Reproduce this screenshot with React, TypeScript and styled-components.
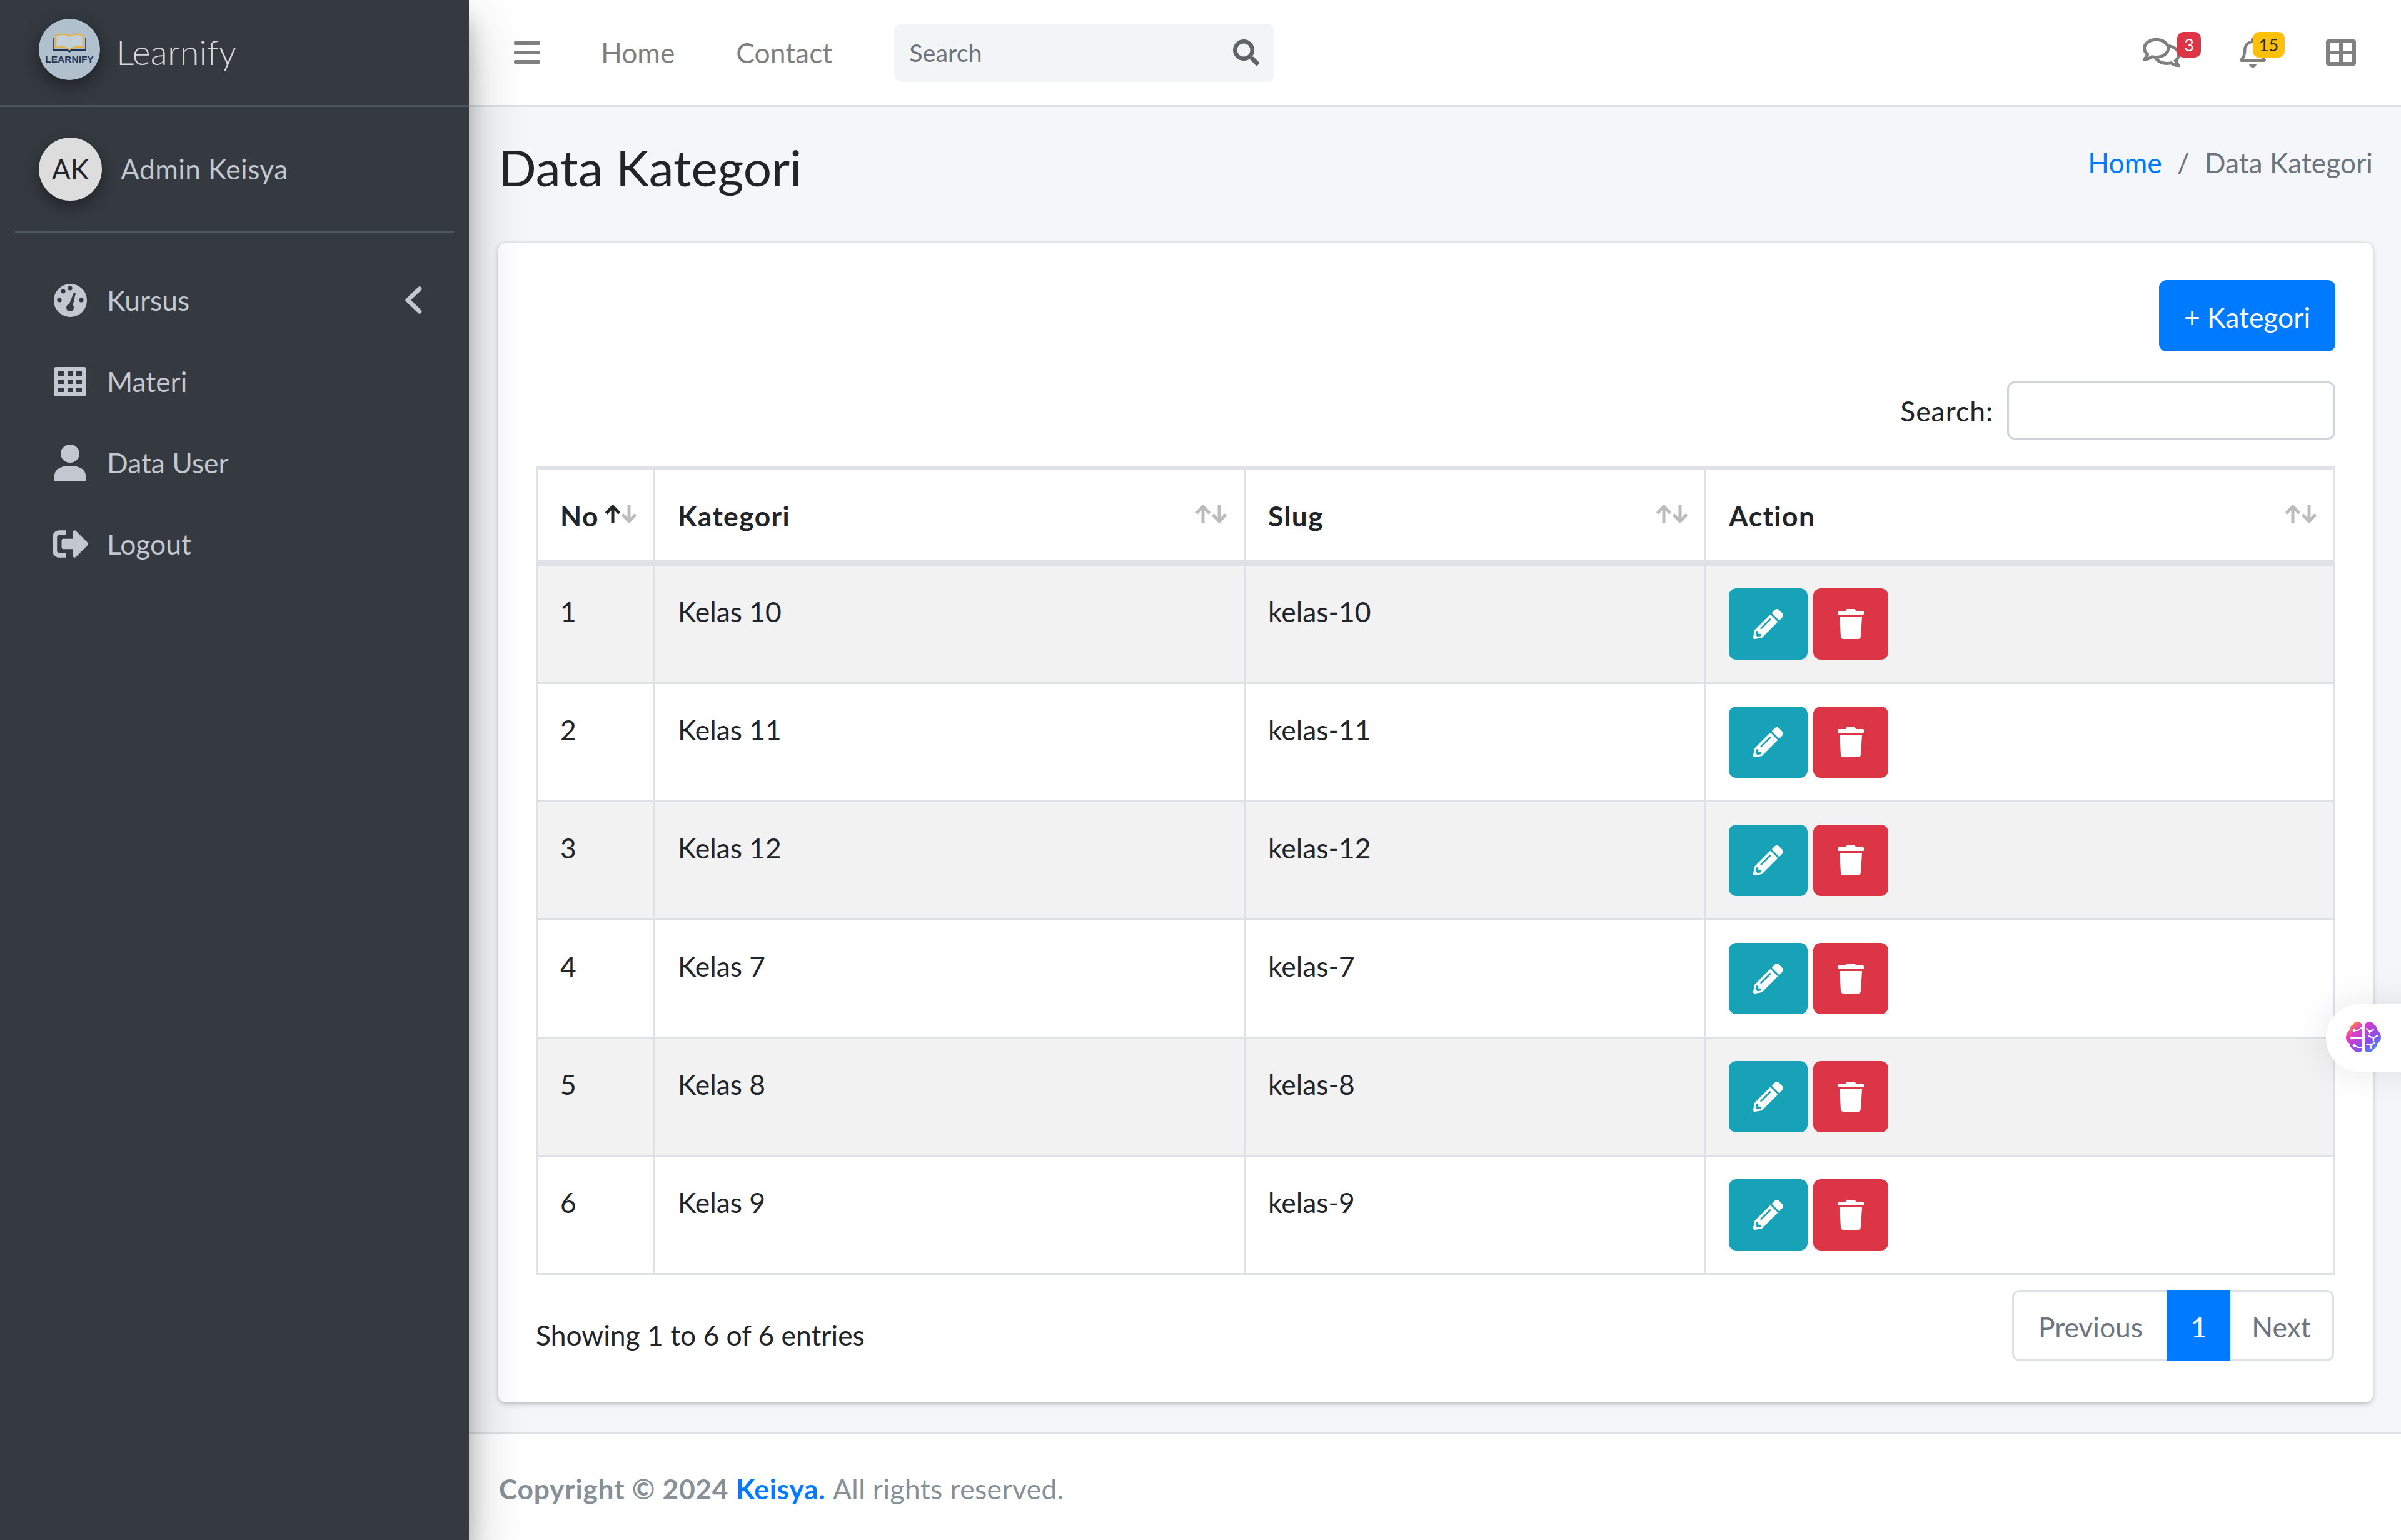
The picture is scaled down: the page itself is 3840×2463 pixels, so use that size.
import React from "react";
import styled, { createGlobalStyle } from "styled-components";
import { FaPencilAlt, FaRegBell, FaRegComments, FaSearch, FaSignOutAlt, FaTrash } from "react-icons/fa";

const GlobalStyle = createGlobalStyle`
  html, body {
    margin: 0;
    padding: 0;
    font-family: "Lato", "Noto Sans", sans-serif;
    font-size: 44.4px;
    line-height: 74px;
    color: #212529;
    background: #f4f6f9;
  }
  * { box-sizing: border-box; }
`;

const Page = styled.div`
  display: flex;
  width: 3840px;
  height: 2463px;
  overflow: hidden;
  position: relative;
`;

const Sidebar = styled.aside`
  width: 750px;
  flex-shrink: 0;
  background: #343a40;
  box-shadow: 0 42px 84px rgba(0, 0, 0, 0.25), 0 30px 30px rgba(0, 0, 0, 0.22);
  position: relative;
  z-index: 2;
`;

const Brand = styled.div`
  display: flex;
  align-items: center;
  height: 171px;
  padding: 0 0 10px 62px;
  gap: 26px;
  border-bottom: 3px solid #4b545c;
`;

const BrandLogo = styled.svg`
  width: 98px;
  height: 98px;
  border-radius: 50%;
  box-shadow: 0 9px 30px rgba(0, 0, 0, 0.45);
`;

const BrandName = styled.span`
  font-size: 56px;
  font-weight: 300;
  color: rgba(255, 255, 255, 0.8);
  padding-top: 8px;
`;

const UserPanel = styled.div`
  display: flex;
  align-items: center;
  gap: 30px;
  margin: 0 24px;
  padding: 48px 0 48px 38px;
  height: 201px;
  border-bottom: 3px solid #4f5962;
`;

const Avatar = styled.div`
  width: 101px;
  height: 101px;
  border-radius: 50%;
  background: #dddddd;
  color: #212529;
  display: flex;
  align-items: center;
  justify-content: center;
  box-shadow: 0 9px 24px rgba(0, 0, 0, 0.4);
`;

const UserName = styled.span`
  color: #c2c7d0;
  letter-spacing: 0.4px;
`;

const SideNav = styled.nav`
  display: flex;
  flex-direction: column;
  padding: 43px 24px 0 62px;
`;

const SideItem = styled.div`
  display: flex;
  align-items: center;
  height: 130px;
  color: #c2c7d0;
`;

const SideIcon = styled.span`
  width: 109px;
  padding-left: 24px;
  display: flex;
  align-items: center;
  svg { display: block; flex-shrink: 0; }
`;

const LogoutIcon = styled(FaSignOutAlt)`
  margin-left: -2px;
`;

const SideLabel = styled.span`
  flex: 1;
`;

const Chevron = styled.svg`
  width: 30px;
  height: 44px;
  margin-right: 50px;
  fill: none;
  stroke: #c2c7d0;
  stroke-width: 7;
  stroke-linecap: round;
  stroke-linejoin: round;
`;

const Main = styled.div`
  flex: 1;
  display: flex;
  flex-direction: column;
  min-width: 0;
`;

const Navbar = styled.header`
  display: flex;
  align-items: center;
  height: 171px;
  background: #ffffff;
  border-bottom: 3px solid #dee2e6;
  padding: 0 0 0 72px;
  color: rgba(0, 0, 0, 0.5);
`;

const Burger = styled.svg`
  width: 42px;
  height: 36px;
  margin-right: 97px;
`;

const NavLink = styled.span<{ $gap: number }>`
  margin-right: ${(p) => p.$gap}px;
`;

const SearchBox = styled.div`
  display: flex;
  align-items: center;
  justify-content: space-between;
  width: 608px;
  height: 93px;
  background: #f2f4f6;
  border-radius: 12px;
  padding: 0 24px;
  font-size: 39.5px;
  color: #6c757d;
`;

const NavRight = styled.div`
  margin-left: auto;
  display: flex;
  align-items: center;
  padding-right: 72px;
`;

const NavIcon = styled.span<{ $gap: number }>`
  position: relative;
  display: flex;
  margin-right: ${(p) => p.$gap}px;
`;

const Badge = styled.span<{ $warn?: boolean }>`
  position: absolute;
  top: ${(p) => (p.$warn ? "-9px" : "-3px")};
  left: ${(p) => (p.$warn ? "24px" : "55px")};
  height: 41px;
  min-width: ${(p) => (p.$warn ? "51px" : "38px")};
  border-radius: 10px;
  background: ${(p) => (p.$warn ? "#ffc107" : "#dc3545")};
  color: ${(p) => (p.$warn ? "#1f2d3d" : "#ffffff")};
  font-size: 27px;
  line-height: 41px;
  text-align: center;
`;

const GridIcon = styled.svg`
  width: 48px;
  height: 42px;
  fill: #808080;
`;

const Content = styled.main`
  flex: 1;
  padding: 0 45px 48px 47px;
  display: flex;
  flex-direction: column;
`;

const ContentHeader = styled.div`
  display: flex;
  align-items: center;
  justify-content: space-between;
  height: 196px;
  margin-bottom: 21px;
`;

const Title = styled.h1`
  margin: 0 0 4px;
  font-size: 80px;
  font-weight: 400;
  line-height: 104px;
`;

const Breadcrumb = styled.div`
  display: flex;
  gap: 24px;
  margin-bottom: 18px;
  color: #6c757d;
`;

const BreadLink = styled.span`
  color: #007bff;
`;

const Card = styled.section`
  flex: 1;
  background: #ffffff;
  border-radius: 12px;
  box-shadow: 0 0 3px rgba(0, 0, 0, 0.125), 0 3px 9px rgba(0, 0, 0, 0.2);
  padding: 60px;
  display: flex;
  flex-direction: column;
`;

const AddRow = styled.div`
  display: flex;
  justify-content: flex-end;
  margin-bottom: 48px;
`;

const AddButton = styled.div`
  height: 114px;
  width: 282px;
  padding-top: 3px;
  background: #007bff;
  color: #ffffff;
  border-radius: 12px;
  display: flex;
  align-items: center;
  justify-content: center;
`;

const FilterRow = styled.div`
  display: flex;
  justify-content: flex-end;
  align-items: center;
  gap: 22px;
  margin-bottom: 43px;
`;

const FilterLabel = styled.span`
  letter-spacing: 1px;
`;

const FilterInput = styled.div`
  width: 525px;
  height: 93px;
  background: #ffffff;
  border: 3px solid #ced4da;
  border-radius: 12px;
`;

const Table = styled.table`
  width: 2878px;
  table-layout: fixed;
  border-collapse: collapse;
  border: 3px solid #dee2e6;
`;

const HeadCell = styled.th`
  padding: 37px 27px 35px 36px;
  height: 151px;
  line-height: 72px;
  text-align: left;
  font-weight: 700;
  letter-spacing: 1.4px;
  vertical-align: top;
  border: 3px solid #dee2e6;
  border-top-width: 6px;
  border-bottom-width: 9px;
`;

const HeadInner = styled.div`
  display: flex;
  justify-content: space-between;
`;

const SortIcon = styled.svg`
  width: 50px;
  height: 28px;
  margin-top: 19px;
  fill: none;
  stroke-width: 5;
`;

const Row = styled.tr<{ $odd: boolean }>`
  background: ${(p) => (p.$odd ? "#f2f2f2" : "#ffffff")};
`;

const Cell = styled.td`
  padding: 36px;
  height: 189px;
  vertical-align: top;
  border: 3px solid #dee2e6;
`;

const Actions = styled.div`
  display: flex;
  gap: 9px;
`;

const ActionButton = styled.div<{ $danger?: boolean }>`
  width: ${(p) => (p.$danger ? "120px" : "126px")};
  height: 114px;
  border-radius: 12px;
  background: ${(p) => (p.$danger ? "#dc3545" : "#17a2b8")};
  color: #ffffff;
  display: flex;
  align-items: center;
  justify-content: center;
`;

const TableFooter = styled.div`
  display: flex;
  justify-content: space-between;
  align-items: flex-start;
`;

const Info = styled.div`
  margin-top: 59px;
`;

const Pagination = styled.div`
  display: flex;
  margin-top: 24px;
  height: 114px;
  margin-right: 2px;
`;

const PageItem = styled.div<{ $width: number; $active?: boolean; $pos?: "first" | "last" }>`
  width: ${(p) => p.$width}px;
  padding-top: 3px;
  display: flex;
  align-items: center;
  justify-content: center;
  background: ${(p) => (p.$active ? "#007bff" : "#ffffff")};
  color: ${(p) => (p.$active ? "#ffffff" : "#6c757d")};
  border: 3px solid ${(p) => (p.$active ? "#007bff" : "#dee2e6")};
  border-left-width: ${(p) => (p.$pos === "last" ? 0 : 3)}px;
  border-right-width: ${(p) => (p.$pos === "first" ? 0 : 3)}px;
  border-radius: ${(p) => (p.$pos === "first" ? "12px 0 0 12px" : p.$pos === "last" ? "0 12px 12px 0" : "0")};
`;

const Footer = styled.footer`
  height: 172px;
  background: #ffffff;
  border-top: 3px solid #dee2e6;
  padding: 4px 48px 0;
  display: flex;
  align-items: center;
  color: #869099;
  letter-spacing: 0.4px;
`;

const FooterStrong = styled.strong`
  white-space: pre;
  letter-spacing: 0.7px;
`;

const FooterLink = styled.span`
  color: #007bff;
`;

const AssistantTab = styled.div`
  position: absolute;
  left: 3720px;
  top: 1606px;
  width: 160px;
  height: 108px;
  border-radius: 54px 0 0 54px;
  background: #ffffff;
  box-shadow: 0 0 60px rgba(0, 0, 0, 0.1);
  display: flex;
  align-items: center;
  padding-left: 32px;
  z-index: 3;
`;

const BrainIcon = styled.svg`
  width: 56px;
  height: 52px;
`;

const rows = [
  { no: 1, kategori: "Kelas 10", slug: "kelas-10" },
  { no: 2, kategori: "Kelas 11", slug: "kelas-11" },
  { no: 3, kategori: "Kelas 12", slug: "kelas-12" },
  { no: 4, kategori: "Kelas 7", slug: "kelas-7" },
  { no: 5, kategori: "Kelas 8", slug: "kelas-8" },
  { no: 6, kategori: "Kelas 9", slug: "kelas-9" },
];

const Sort = ({ active }: { active?: boolean }) => (
  <SortIcon viewBox="0 0 50 28">
    <path d="M12 28V3M1.5 13 12 2l10.5 11" stroke={active ? "#212529" : "#bcbcbc"} />
    <path d="M38 0v25M27.5 15 38 26l10.5-11" stroke="#bcbcbc" />
  </SortIcon>
);

const GaugeIcon = () => (
  <svg width="53" height="53" viewBox="0 0 53 53">
    <circle cx="26.5" cy="26.5" r="26.5" fill="#c2c7d0" />
    <g fill="#343a40">
      <circle cx="9" cy="26" r="3.6" />
      <circle cx="15" cy="12" r="3.6" />
      <circle cx="26" cy="7" r="3.6" />
      <circle cx="44" cy="26" r="3.6" />
      <circle cx="26" cy="38" r="6" />
      <path d="M24 34l8-20 3 1-5 21z" />
    </g>
  </svg>
);

const TilesIcon = () => (
  <svg width="52" height="47" viewBox="0 0 52 47">
    <path
      fillRule="evenodd"
      fill="#c2c7d0"
      d="M4 0h44a4 4 0 0 1 4 4v39a4 4 0 0 1-4 4H4a4 4 0 0 1-4-4V4a4 4 0 0 1 4-4zM7 7v7h9V7zm15 0v7h9V7zm14 0v7h9V7zM7 20v7h9v-7zm15 0v7h9v-7zm14 0v7h9v-7zM7 33v7h9v-7zm15 0v7h9v-7zm14 0v7h9v-7z"
    />
  </svg>
);

const PersonIcon = () => (
  <svg width="52" height="58" viewBox="0 0 52 58">
    <ellipse cx="26" cy="14.5" rx="15" ry="14.5" fill="#c2c7d0" />
    <path d="M1 58V50C1 40 11 34 26 34s25 6 25 16v8z" fill="#c2c7d0" />
  </svg>
);

const App: React.FC = () => {
  return (
    <Page>
      <GlobalStyle />
      <Sidebar>
        <Brand>
          <BrandLogo viewBox="0 0 98 98">
            <circle cx="49" cy="49" r="49" fill="#b0c0cc" />
            <path
              d="M27 27c7-3 16-3 22 1 6-4 15-4 22-1v19c-7-2-16-1-22 3-6-4-15-5-22-3z"
              fill="#c4d0d8"
              stroke="#e2b34c"
              strokeWidth="2.5"
            />
            <path d="M23 30v19h19" fill="none" stroke="#1e3358" strokeWidth="1.6" />
            <path d="M75 30v19H56" fill="none" stroke="#1e3358" strokeWidth="1.6" />
            <path d="M23 48h19c3 0 5 1 7 3 2-2 4-3 7-3h19v3H57l-5 1-3 2-3-2-5-1H23z" fill="#1e3358" />
            <text x="49" y="70" textAnchor="middle" fontFamily="'Liberation Sans', sans-serif" fontWeight="700" fontSize="15.5" fill="#1e3358">
              LEARNIFY
            </text>
          </BrandLogo>
          <BrandName>Learnify</BrandName>
        </Brand>
        <UserPanel>
          <Avatar>AK</Avatar>
          <UserName>Admin Keisya</UserName>
        </UserPanel>
        <SideNav>
          <SideItem>
            <SideIcon>
              <GaugeIcon />
            </SideIcon>
            <SideLabel>Kursus</SideLabel>
            <Chevron viewBox="0 0 30 44">
              <path d="M25 4 6 22l19 18" />
            </Chevron>
          </SideItem>
          <SideItem>
            <SideIcon>
              <TilesIcon />
            </SideIcon>
            <SideLabel>Materi</SideLabel>
          </SideItem>
          <SideItem>
            <SideIcon>
              <PersonIcon />
            </SideIcon>
            <SideLabel>Data User</SideLabel>
          </SideItem>
          <SideItem>
            <SideIcon>
              <LogoutIcon size={58} />
            </SideIcon>
            <SideLabel>Logout</SideLabel>
          </SideItem>
        </SideNav>
      </Sidebar>
      <Main>
        <Navbar>
          <Burger viewBox="0 0 42 36">
            <rect width="42" height="6" y="0" rx="2" fill="#808080" />
            <rect width="42" height="6" y="15" rx="2" fill="#808080" />
            <rect width="42" height="6" y="30" rx="2" fill="#808080" />
          </Burger>
          <NavLink $gap={98}>Home</NavLink>
          <NavLink $gap={99}>Contact</NavLink>
          <SearchBox>
            Search
            <FaSearch size={42} color="#5f6468" />
          </SearchBox>
          <NavRight>
            <NavIcon $gap={92}>
              <FaRegComments size={60} color="#808080" />
              <Badge>3</Badge>
            </NavIcon>
            <NavIcon $gap={93}>
              <FaRegBell size={48} color="#808080" />
              <Badge $warn>15</Badge>
            </NavIcon>
            <GridIcon viewBox="0 0 48 42">
              <path
                fillRule="evenodd"
                d="M4 0h40a4 4 0 0 1 4 4v34a4 4 0 0 1-4 4H4a4 4 0 0 1-4-4V4a4 4 0 0 1 4-4zM6 6v12h15V6zm21 0v12h15V6zM6 24v12h15V24zm21 0v12h15V24z"
              />
            </GridIcon>
          </NavRight>
        </Navbar>
        <Content>
          <ContentHeader>
            <Title>Data Kategori</Title>
            <Breadcrumb>
              <BreadLink>Home</BreadLink>
              <span>/</span>
              <span>Data Kategori</span>
            </Breadcrumb>
          </ContentHeader>
          <Card>
            <AddRow>
              <AddButton>+ Kategori</AddButton>
            </AddRow>
            <FilterRow>
              <FilterLabel>Search:</FilterLabel>
              <FilterInput />
            </FilterRow>
            <Table>
              <colgroup>
                <col style={{ width: 188 }} />
                <col style={{ width: 944 }} />
                <col style={{ width: 737 }} />
                <col />
              </colgroup>
              <thead>
                <tr>
                  <HeadCell>
                    <HeadInner>
                      No <Sort active />
                    </HeadInner>
                  </HeadCell>
                  <HeadCell>
                    <HeadInner>
                      Kategori <Sort />
                    </HeadInner>
                  </HeadCell>
                  <HeadCell>
                    <HeadInner>
                      Slug <Sort />
                    </HeadInner>
                  </HeadCell>
                  <HeadCell>
                    <HeadInner>
                      Action <Sort />
                    </HeadInner>
                  </HeadCell>
                </tr>
              </thead>
              <tbody>
                {rows.map((row) => (
                  <Row key={row.no} $odd={row.no % 2 === 1}>
                    <Cell>{row.no}</Cell>
                    <Cell>{row.kategori}</Cell>
                    <Cell>{row.slug}</Cell>
                    <Cell>
                      <Actions>
                        <ActionButton>
                          <FaPencilAlt size={48} />
                        </ActionButton>
                        <ActionButton $danger>
                          <FaTrash size={48} />
                        </ActionButton>
                      </Actions>
                    </Cell>
                  </Row>
                ))}
              </tbody>
            </Table>
            <TableFooter>
              <Info>Showing 1 to 6 of 6 entries</Info>
              <Pagination>
                <PageItem $width={248} $pos="first">Previous</PageItem>
                <PageItem $width={101} $active>1</PageItem>
                <PageItem $width={166} $pos="last">Next</PageItem>
              </Pagination>
            </TableFooter>
          </Card>
        </Content>
        <Footer>
          <FooterStrong>
            Copyright © 2024 <FooterLink>Keisya.</FooterLink>{" "}
          </FooterStrong>
          All rights reserved.
        </Footer>
      </Main>
      <AssistantTab>
        <BrainIcon viewBox="0 0 56 52">
          <defs>
            <linearGradient id="brainFill" x1="0" y1="0" x2="1" y2="1">
              <stop offset="0.08" stopColor="#ff9a1f" />
              <stop offset="0.3" stopColor="#e23dc8" />
              <stop offset="0.65" stopColor="#8a4dea" />
              <stop offset="1" stopColor="#2aa8ff" />
            </linearGradient>
          </defs>
          <path
            fill="url(#brainFill)"
            d="M26 6C25 2 22 0 18 0c-3 0-6 2-7 5-3 1-5 4-4 8-4 2-7 6-7 13 0 4 3 7 6 9 0 4 2 7 5 8 2 4 5 6 9 6 3 0 6-2 6-5zM30 6c1-4 4-6 8-6 3 0 6 2 7 5 3 1 5 4 4 8 4 2 7 6 7 13 0 4-3 7-6 9 0 4-2 7-5 8-2 4-5 6-9 6-3 0-6-2-6-5z"
          />
          <g fill="none" stroke="#ffffff" strokeWidth="2.2" strokeLinecap="round">
            <path d="M13 14h6l7-5M9 26h17M13 38l6 3h7" />
            <path d="M33 11l5 5 6-3M38 16v3M36 23l8 3 7-4M44 26v5M33 36l7 1 6-3M40 37v5" />
          </g>
          <g fill="#ffffff">
            <circle cx="13" cy="14" r="2.4" />
            <circle cx="9" cy="26" r="2.4" />
            <circle cx="13" cy="38" r="2.4" />
          </g>
        </BrainIcon>
      </AssistantTab>
    </Page>
  );
};

export default App;
